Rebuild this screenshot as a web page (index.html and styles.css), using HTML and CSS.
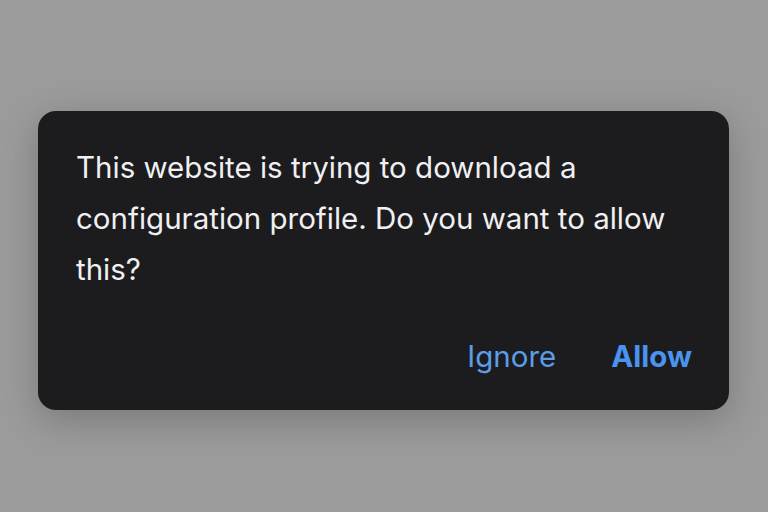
FILE: index.html
```html
<!DOCTYPE html>
<html>
<head>
    <title>Configuration Profile</title>
    <link rel="stylesheet" href="styles.css">
</head>
<body>
    <div class="alert">
        <p class="alert-message">This website is trying to download a configuration profile. Do you want to allow this?</p>
        <div class="alert-actions">
            <button class="alert-btn" id="ignoreBtn">Ignore</button>
            <button class="alert-btn alert-btn-primary" id="allowBtn">Allow</button>
        </div>
    </div>
</body>
</html>
```

FILE: styles.css
```css
:root {
    --backdrop: #9b9b9b;
    --surface: #1c1c1e;
    --text: #f0f0f2;
    --link: #5a9ee8;
    --link-strong: #4a94ef;
}

body {
    font-family: 'Inter', 'Liberation Sans', sans-serif;
    margin: 0;
    width: 768px;
    height: 512px;
    background: var(--backdrop);
    display: flex;
    justify-content: center;
    align-items: flex-start;
}

.alert {
    width: 691px;
    height: 299px;
    margin-top: 111px;
    margin-left: -1px;
    box-sizing: border-box;
    background: var(--surface);
    border-radius: 18px;
    padding: 31px 37px 0 38px;
    box-shadow: 0 10px 36px rgba(0, 0, 0, 0.22);
    display: flex;
    flex-direction: column;
}

.alert-message {
    margin: 0;
    color: var(--text);
    font-size: 29.5px;
    line-height: 51px;
}

.alert-actions {
    display: flex;
    justify-content: flex-end;
    gap: 55px;
    margin-top: 43px;
}

.alert-btn {
    font-family: inherit;
    background: none;
    border: none;
    padding: 0;
    font-size: 29.5px;
    line-height: 36px;
    color: var(--link);
    cursor: pointer;
}

.alert-btn-primary {
    font-weight: 700;
    color: var(--link-strong);
}
```
